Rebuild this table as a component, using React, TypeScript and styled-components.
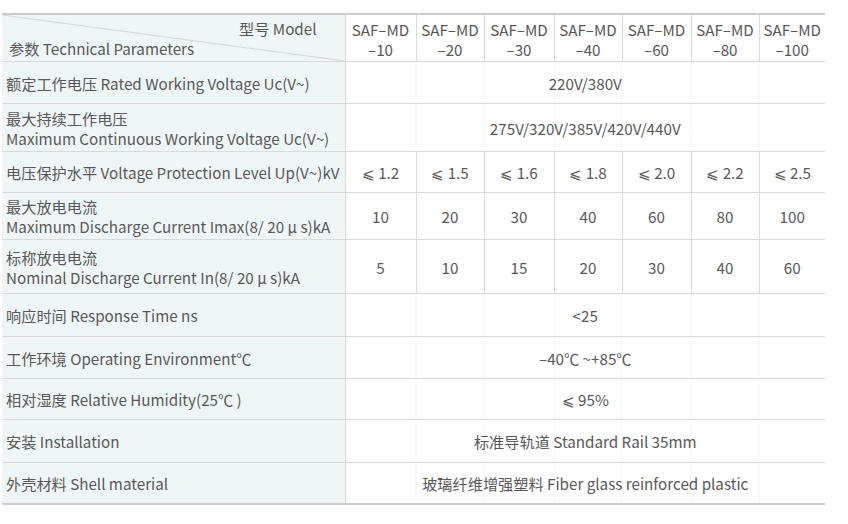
import React from "react";
import styled, { createGlobalStyle } from "styled-components";

const Global = createGlobalStyle`
  html, body { margin: 0; padding: 0; background: #ffffff; }
  body { font-family: "Noto Sans CJK SC", "Noto Sans", sans-serif; }
`;

const Page = styled.div`
  padding: 13px 0 0 2px;
`;

const Table = styled.table`
  border-collapse: collapse;
  table-layout: fixed;
  width: 823px;
  border-top: 2px solid #cdcdcd;
  border-bottom: 2px solid #cdcdcd;
  font-family: "Noto Sans CJK SC", "Noto Sans", sans-serif;
  font-size: 15.2px;
  color: #585858;
`;

const Row = styled.tr<{ $h: number }>`
  height: ${(p) => p.$h}px;
`;

const Cell = styled.td`
  border-top: 1px solid #dadada;
  border-bottom: 1px solid #dadada;
  border-left: 1px solid #dadada;
  padding: 0;
  vertical-align: middle;
  white-space: nowrap;
  line-height: 20px;
`;

const CornerCell = styled(Cell)`
  position: relative;
  background: #eef7f6;
  border-left: none;
  padding: 0;
`;

const Diagonal = styled.svg`
  position: absolute;
  inset: 0;
  width: 100%;
  height: 100%;
`;

const CornerInner = styled.div`
  position: relative;
  height: 46px;
  display: flex;
  flex-direction: column;
  justify-content: space-between;
  padding: 4px 28px 3px 7px;
  box-sizing: border-box;
  line-height: 19px;
`;

const CornerTop = styled.span`
  align-self: flex-end;
`;

const CornerBottom = styled.span`
  align-self: flex-start;
`;

const ModelCell = styled(Cell)`
  text-align: center;
  background: #ffffff;
  line-height: 20px;
  padding-top: 1px;
`;

const LabelCell = styled(Cell)`
  background: #eef7f6;
  border-left: none;
  padding-left: 4px;
`;

const ValueCell = styled(Cell)`
  text-align: center;
  background: #ffffff;
`;

const SpanCell = styled(ValueCell)`
  background-color: #ffffff;
  background-image: linear-gradient(to right,
    transparent 70px, #f3f3f3 70px, #f3f3f3 71px,
    transparent 71px, transparent 138px, #f3f3f3 138px, #f3f3f3 139px,
    transparent 139px, transparent 208px, #f3f3f3 208px, #f3f3f3 209px,
    transparent 209px, transparent 276px, #f3f3f3 276px, #f3f3f3 277px,
    transparent 277px, transparent 345px, #f3f3f3 345px, #f3f3f3 346px,
    transparent 346px, transparent 413px, #f3f3f3 413px, #f3f3f3 414px,
    transparent 414px);
`;

const Line = styled.div``;

const models = ["-10", "-20", "-30", "-40", "-60", "-80", "-100"];
const colWidths = [343, 71, 68, 70, 68, 69, 68, 66];

type RowData =
  | { label: string[]; h: number; span: string }
  | { label: string[]; h: number; values: string[] };

const rows: RowData[] = [
  { label: ["额定工作电压 Rated Working Voltage Uc(V~)"], h: 42, span: "220V/380V" },
  {
    label: ["最大持续工作电压", "Maximum Continuous Working Voltage Uc(V~)"],
    h: 48,
    span: "275V/320V/385V/420V/440V",
  },
  {
    label: ["电压保护水平 Voltage Protection Level Up(V~)kV"],
    h: 41,
    values: ["⩽ 1.2", "⩽ 1.5", "⩽ 1.6", "⩽ 1.8", "⩽ 2.0", "⩽ 2.2", "⩽ 2.5"],
  },
  {
    label: ["最大放电电流", "Maximum Discharge Current Imax(8/ 20 μ s)kA"],
    h: 47,
    values: ["10", "20", "30", "40", "60", "80", "100"],
  },
  {
    label: ["标称放电电流", "Nominal Discharge Current In(8/ 20 μ s)kA"],
    h: 54,
    values: ["5", "10", "15", "20", "30", "40", "60"],
  },
  { label: ["响应时间 Response Time ns"], h: 43, span: "<25" },
  { label: ["工作环境 Operating Environment℃"], h: 42, span: "–40℃ ~+85℃" },
  { label: ["相对湿度 Relative Humidity(25℃ )"], h: 41, span: "⩽ 95%" },
  { label: ["安装 Installation"], h: 43, span: "标准导轨道 Standard Rail 35mm" },
  { label: ["外壳材料 Shell material"], h: 41, span: "玻璃纤维增强塑料 Fiber glass reinforced plastic" },
];

export default function App() {
  return (
    <>
      <Global />
      <Page>
        <Table>
          <colgroup>
            {colWidths.map((w, i) => (
              <col key={i} style={{ width: w }} />
            ))}
          </colgroup>
          <tbody>
            <Row $h={47}>
              <CornerCell>
                <Diagonal viewBox="0 0 343 46" preserveAspectRatio="none">
                  <line x1="0" y1="0" x2="343" y2="46" stroke="#d4d4d4" strokeWidth="1" />
                </Diagonal>
                <CornerInner>
                  <CornerTop>型号 Model</CornerTop>
                  <CornerBottom>参数 Technical Parameters</CornerBottom>
                </CornerInner>
              </CornerCell>
              {models.map((m) => (
                <ModelCell key={m}>
                  <Line>SAF–MD</Line>
                  <Line>{m.replace("-", "–")}</Line>
                </ModelCell>
              ))}
            </Row>
            {rows.map((r, i) => (
              <Row key={i} $h={r.h}>
                <LabelCell>
                  {r.label.map((l, j) => (
                    <Line key={j}>{l}</Line>
                  ))}
                </LabelCell>
                {"span" in r ? (
                  <SpanCell colSpan={7}>{r.span}</SpanCell>
                ) : (
                  r.values.map((v, j) => <ValueCell key={j}>{v}</ValueCell>)
                )}
              </Row>
            ))}
          </tbody>
        </Table>
      </Page>
    </>
  );
}
